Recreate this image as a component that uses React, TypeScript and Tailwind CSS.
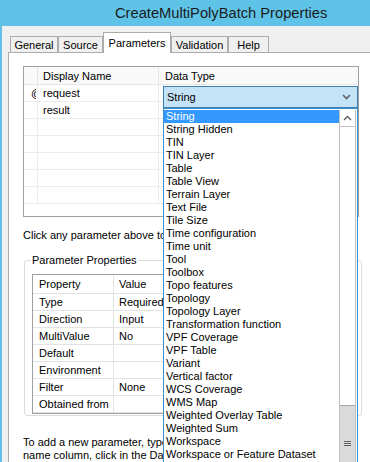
const TYPES = [
  'String',
  'String Hidden',
  'TIN',
  'TIN Layer',
  'Table',
  'Table View',
  'Terrain Layer',
  'Text File',
  'Tile Size',
  'Time configuration',
  'Time unit',
  'Tool',
  'Toolbox',
  'Topo features',
  'Topology',
  'Topology Layer',
  'Transformation function',
  'VPF Coverage',
  'VPF Table',
  'Variant',
  'Vertical factor',
  'WCS Coverage',
  'WMS Map',
  'Weighted Overlay Table',
  'Weighted Sum',
  'Workspace',
  'Workspace or Feature Dataset',
];

const PROPS: [string, string][] = [
  ['Type', 'Required'],
  ['Direction', 'Input'],
  ['MultiValue', 'No'],
  ['Default', ''],
  ['Environment', ''],
  ['Filter', 'None'],
  ['Obtained from', ''],
];

function Tab({ label, width, active }: { label: string; width: string; active?: boolean }) {
  if (active) {
    return (
      <div
        className={`${width} h-[21px] -mb-px relative z-10 bg-white border border-b-0 border-[#acacac] flex items-start justify-center pt-[3px] leading-[14px]`}
      >
        {label}
      </div>
    );
  }
  return (
    <div
      className={`${width} h-[16px] bg-[#f0f0f0] border border-b-0 border-[#acacac] flex items-center justify-center leading-[14px]`}
    >
      {label}
    </div>
  );
}

function ParamGrid() {
  const rows = ['request', 'result', '', '', '', '', ''];
  return (
    <div className="w-[336px] h-[151px] border border-[#a0a0a0] overflow-hidden bg-white">
      <div className="flex h-[18px] border-b border-[#e6e6e6] bg-[#f9f9f9]">
        <div className="w-[14px] border-r border-[#e6e6e6]" />
        <div className="w-[121px] border-r border-[#e6e6e6] pl-[5px] leading-[18px]">Display Name</div>
        <div className="flex-1 pl-[6px] leading-[18px]">Data Type</div>
      </div>
      {rows.map((r, i) => (
        <div key={i} className="flex h-[17px] border-b border-[#ececec]">
          <div className="w-[14px] border-r border-[#ececec] flex pl-[7px]">
            {i === 0 && (
              <div className="w-[5px] overflow-hidden leading-[17px]">
                <span>@</span>
              </div>
            )}
          </div>
          <div className="w-[121px] border-r border-[#ececec] pl-[5px] leading-[17px]">{r}</div>
          <div className="flex-1" />
        </div>
      ))}
    </div>
  );
}

function PropGrid() {
  return (
    <div className="w-[322px] h-[140px] border border-[#a0a0a0] bg-white overflow-hidden">
      <div className="flex h-[19px] border-b border-[#e3e3e3]">
        <div className="w-[81px] border-r border-[#e3e3e3] pl-[6px] leading-[19px]">Property</div>
        <div className="flex-1 pl-[5px] leading-[19px]">Value</div>
      </div>
      {PROPS.map(([k, v]) => (
        <div key={k} className="flex h-[17px] border-b border-[#e3e3e3]">
          <div className="w-[81px] border-r border-[#e3e3e3] pl-[6px] leading-[16px]">{k}</div>
          <div className="flex-1 pl-[5px] leading-[16px]">{v}</div>
        </div>
      ))}
    </div>
  );
}

function TypeDropdown() {
  return (
    <div className="absolute left-[163px] top-[86px] w-[195px]">
      <div className="h-[22px] bg-[#c5e3f6] border border-[#3c7fb1] flex items-center pl-[3px] pr-[6px]">
        <span className="flex-1 leading-[14px]">String</span>
        <svg width="9" height="6" viewBox="0 0 9 6">
          <polyline points="1,1 4.5,4.5 8,1" fill="none" stroke="#606060" strokeWidth="1.6" />
        </svg>
      </div>
      <div className="h-[360px] bg-white border border-[#3a8fd0] flex pt-[1px]">
        <div className="flex-1">
          {TYPES.map((t, i) => (
            <div
              key={t}
              className={`h-[13px] leading-[13px] pl-[2px] whitespace-nowrap ${
                i === 0 ? 'bg-[#3399ff] text-white' : ''
              }`}
            >
              {t}
            </div>
          ))}
        </div>
        <div className="w-[17px] mr-[1px] flex flex-col border-x border-[#c2c2c2]">
          <div className="h-[17px] border-b border-[#c2c2c2] flex items-center justify-center">
            <svg width="9" height="6" viewBox="0 0 9 6">
              <polyline points="1,5 4.5,1.5 8,5" fill="none" stroke="#606060" strokeWidth="1.4" />
            </svg>
          </div>
          <div className="h-[278px]" />
          <div className="flex-1 bg-[#dadada] border-t border-[#a6a6a6] pt-[35px] flex flex-col items-center gap-[1px]">
            <div className="w-[7px] h-[1px] bg-[#606060]" />
            <div className="w-[7px] h-[1px] bg-[#606060]" />
            <div className="w-[7px] h-[1px] bg-[#606060]" />
          </div>
        </div>
      </div>
    </div>
  );
}

export default function App() {
  return (
    <div className="relative w-[370px] h-[462px] overflow-hidden bg-[#f0f0f0] font-['Liberation_Sans',Arial,sans-serif] text-[11px] text-black">
      <div className="h-[26px] bg-[#5fc3e8] pl-[115px] text-[14.7px] leading-[26px] text-[#1b1b1b]">
        CreateMultiPolyBatch Properties
      </div>
      <div className="flex h-[436px]">
        <div className="w-[2px] bg-[#5fc3e8]" />
        <div className="flex-1 pl-[6px] flex flex-col">
          <div className="h-[27px] flex items-end pl-[2px]">
            <Tab label="General" width="w-[48px]" />
            <Tab label="Source" width="w-[45px]" />
            <Tab label="Parameters" width="w-[68px]" active />
            <Tab label="Validation" width="w-[57px]" />
            <Tab label="Help" width="w-[41px]" />
          </div>
          <div className="flex-1 bg-white border-l border-t border-[#acacac] pl-[14px] pt-[13px]">
            <ParamGrid />
            <div className="mt-[12px] h-[13px] leading-[13px] whitespace-nowrap">
              Click any parameter above to see its
            </div>
            <fieldset className="mt-[12px] ml-[1px] w-[338px] h-[162px] border border-[#dcdcdc] rounded-[3px] px-[7px]">
              <legend className="ml-[-1px] px-[1px] leading-[13px]">Parameter Properties</legend>
              <div className="mt-[7px]">
                <PropGrid />
              </div>
            </fieldset>
            <div className="mt-[20px] leading-[13px] whitespace-nowrap">
              <div>To add a new parameter, type its name</div>
              <div>name column, click in the Data Type</div>
            </div>
          </div>
        </div>
      </div>
      <TypeDropdown />
    </div>
  );
}
